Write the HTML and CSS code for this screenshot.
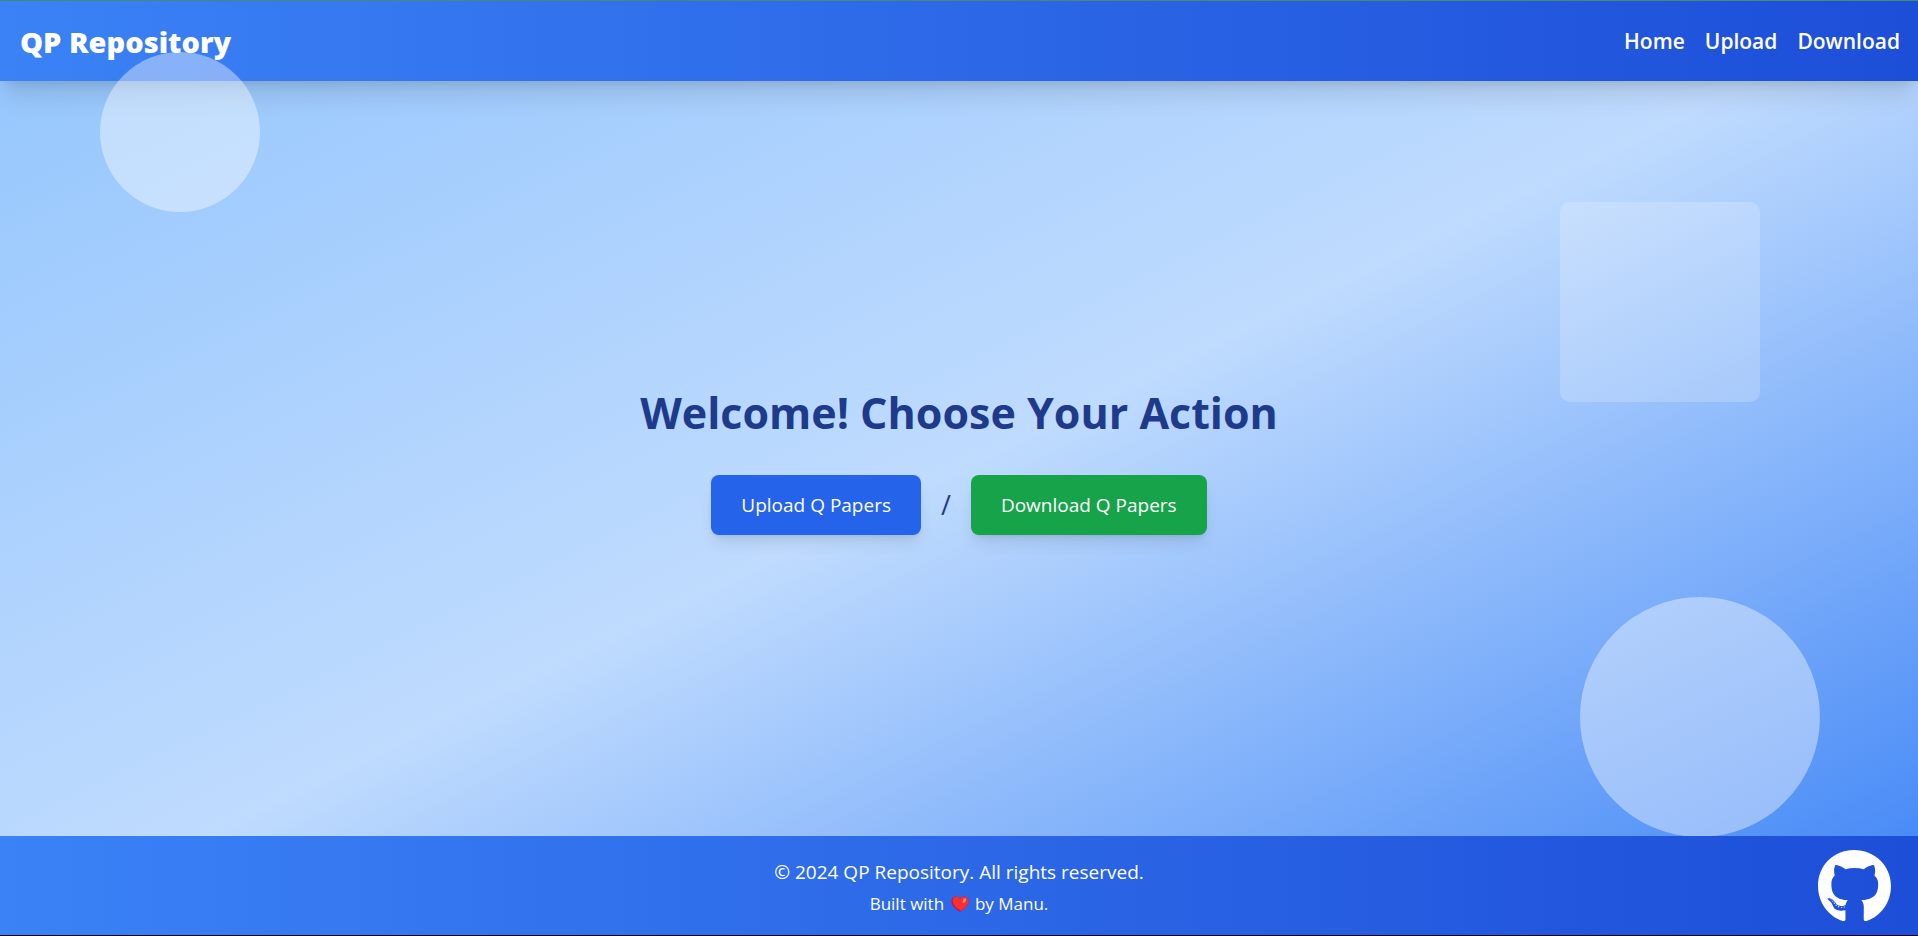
FILE: index.html
```html
<!DOCTYPE html>
<html lang="en">
<head>
<meta charset="utf-8">
<title>QP Repository</title>
<link rel="stylesheet" href="styles.css">
</head>
<body>
<div class="page">
  <header class="header">
    <a class="brand" href="#">QP Repository</a>
    <nav class="nav">
      <a href="#">Home</a>
      <a href="#">Upload</a>
      <a href="#">Download</a>
    </nav>
  </header>
  <main class="main">
    <h1 class="title">Welcome! Choose Your Action</h1>
    <div class="actions">
      <button class="btn btn-upload" type="button">Upload Q Papers</button>
      <span class="slash">/</span>
      <button class="btn btn-download" type="button">Download Q Papers</button>
    </div>
  </main>
  <div class="shape shape-small"></div>
  <div class="shape shape-square"></div>
  <div class="shape shape-large"></div>
  <footer class="footer">
    <p class="copyright">© 2024 QP Repository. All rights reserved.</p>
    <p class="credit">Built with
      <svg class="heart" viewBox="0 0 18 16" role="img" aria-label="love"><path fill="#ca0b4a" d="M9 16C6 13.600 .5 10 .5 5.200C.5 2.300 2.500.5 4.900.5C6.700.5 8.200 1.500 9 3C9.800 1.500 11.300.5 13.100.5C15.500.5 17.500 2.300 17.500 5.200C17.500 10 12 13.600 9 16Z"/><path fill="#f92f2f" d="M9.800 15C6.500 12.500 1.600 9.500 1.600 5C1.600 2.400 3 .5 4.900.5C6.700.5 8.200 1.500 9 3C9.800 1.500 11.300.5 13.100.5C15.500.5 17.500 2.300 17.500 5.200C17.500 9.800 12.500 13 9.800 15Z"/><ellipse cx="13.400" cy="4.600" rx="1.500" ry="2.500" fill="#ff8687" transform="rotate(28 13.400 4.600)"/></svg>
      by Manu.</p>
    <a class="github" href="#" aria-label="GitHub">
      <svg viewBox="0 8 496 484" fill="#fff"><path d="M165.900 397.400c0 2-2.300 3.600-5.200 3.600-3.300.3-5.600-1.300-5.600-3.600 0-2 2.300-3.600 5.200-3.600 3-.3 5.600 1.300 5.600 3.600zm-31.100-4.500c-.7 2 1.300 4.300 4.300 4.900 2.600 1 5.600 0 6.200-2s-1.300-4.300-4.300-5.200c-2.600-.7-5.500.3-6.200 2.300zm44.200-1.700c-2.900.7-4.900 2.600-4.600 4.900.3 2 2.900 3.300 5.900 2.600 2.900-.7 4.900-2.600 4.600-4.600-.3-1.900-3-3.200-5.900-2.900zM244.800 8C106.100 8 0 113.300 0 252c0 110.900 69.800 205.800 169.500 239.200 12.800 2.300 17.300-5.600 17.300-12.100 0-6.200-.3-40.400-.3-61.400 0 0-70 15-84.700-29.800 0 0-11.400-29.100-27.800-36.600 0 0-22.900-15.700 1.600-15.400 0 0 24.900 2 38.600 25.800 21.900 38.600 58.600 27.500 72.900 20.900 2.300-16 8.800-27.100 16-33.700-55.900-6.200-112.300-14.300-112.300-110.500 0-27.500 7.600-41.300 23.600-58.900-2.600-6.500-11.100-33.300 2.600-67.900 20.900-6.500 69 27 69 27 20-5.600 41.500-8.500 62.800-8.500s42.800 2.900 62.800 8.500c0 0 48.100-33.600 69-27 13.700 34.700 5.200 61.400 2.600 67.900 16 17.700 25.800 31.500 25.800 58.900 0 96.500-58.900 104.200-114.800 110.500 9.200 7.900 17 22.900 17 46.400 0 33.700-.3 75.400-.3 83.600 0 6.500 4.600 14.400 17.300 12.100C428.200 457.800 496 362.900 496 252 496 113.300 383.500 8 244.800 8zM97.200 352.900c-1.300 1-1 3.300.7 5.200 1.600 1.600 3.900 2.300 5.200 1 1.300-1 1-3.300-.7-5.200-1.600-1.600-3.900-2.300-5.200-1zm-10.800-8.100c-.7 1.300.3 2.900 2.300 3.900 1.600 1 3.600.7 4.300-.7.7-1.300-.3-2.900-2.300-3.900-2-.6-3.600-.3-4.300.7zm32.400 35.600c-1.600 1.300-1 4.300 1.300 6.200 2.300 2.300 5.200 2.600 6.500 1 1.300-1.300.7-4.300-1.300-6.200-2.200-2.300-5.200-2.600-6.500-1zm-11.400-14.700c-1.600 1-1.600 3.600 0 5.900 1.600 2.300 4.300 3.300 5.600 2.300 1.600-1.300 1.600-3.900 0-6.200-1.400-2.300-4-3.300-5.600-2z"/></svg>
    </a>
  </footer>
</div>
</body>
</html>
```
FILE: styles.css
```css
* { box-sizing: border-box; }
body { margin: 0; font-family: "Segoe UI", "Open Sans", sans-serif; color: #fff; }
a { color: inherit; text-decoration: none; }
p, h1 { margin: 0; }

.page {
  position: relative;
  display: flex;
  flex-direction: column;
  min-height: 100vh;
  border-top: 1px solid #468a72;
  border-bottom: 1px solid #000;
  background: linear-gradient(to bottom right, #93c5fd, #bfdbfe, #3b82f6);
}

.header, .footer { background: linear-gradient(to right, #3b82f6, #1d4ed8); }
.header {
  display: flex;
  align-items: center;
  justify-content: space-between;
  height: 80px;
  padding: 0 18px 0 20px;
  box-shadow: 0 20px 25px -5px rgba(0, 0, 0, .1), 0 8px 10px -6px rgba(0, 0, 0, .1);
}
.brand { font-size: 29px; font-weight: 800; }
.nav { display: flex; gap: 20px; font-size: 21px; font-weight: 600; }

.main {
  flex: 1;
  display: flex;
  flex-direction: column;
  align-items: center;
  justify-content: center;
  gap: 32px;
}
.title { font-size: 43px; line-height: 60px; font-weight: 700; color: #1e3a8a; }
.actions { display: flex; align-items: center; gap: 20px; }
.btn {
  height: 60px;
  padding: 0 30px;
  border: 0;
  border-radius: 8px;
  color: #fff;
  font: inherit;
  font-size: 19px;
  box-shadow: 0 10px 15px -3px rgba(0, 0, 0, .1), 0 4px 6px -4px rgba(0, 0, 0, .1);
}
.btn-upload { background: #2563eb; }
.btn-download { background: #16a34a; }
.slash { font-size: 27px; line-height: 32px; color: #1e3a8a; }

.shape { position: absolute; background: #fff; pointer-events: none; }
.shape-small { top: 51px; left: 100px; width: 160px; height: 160px; border-radius: 50%; opacity: .4; }
.shape-square { top: 201px; right: 158px; width: 200px; height: 200px; border-radius: 10px; opacity: .2; }
.shape-large { bottom: 98px; right: 98px; width: 240px; height: 240px; border-radius: 50%; opacity: .4; }

.footer {
  position: relative;
  display: flex;
  flex-direction: column;
  align-items: center;
  padding: 20px 20px 16px;
}
.copyright { font-size: 19px; line-height: 32px; }
.credit { font-size: 17px; line-height: 31px; }
.heart { width: 18px; height: 16px; margin: 0 2px; vertical-align: -2px; }
.github { position: absolute; right: 27px; bottom: 14px; width: 73px; }
.github svg { display: block; width: 100%; }
```
